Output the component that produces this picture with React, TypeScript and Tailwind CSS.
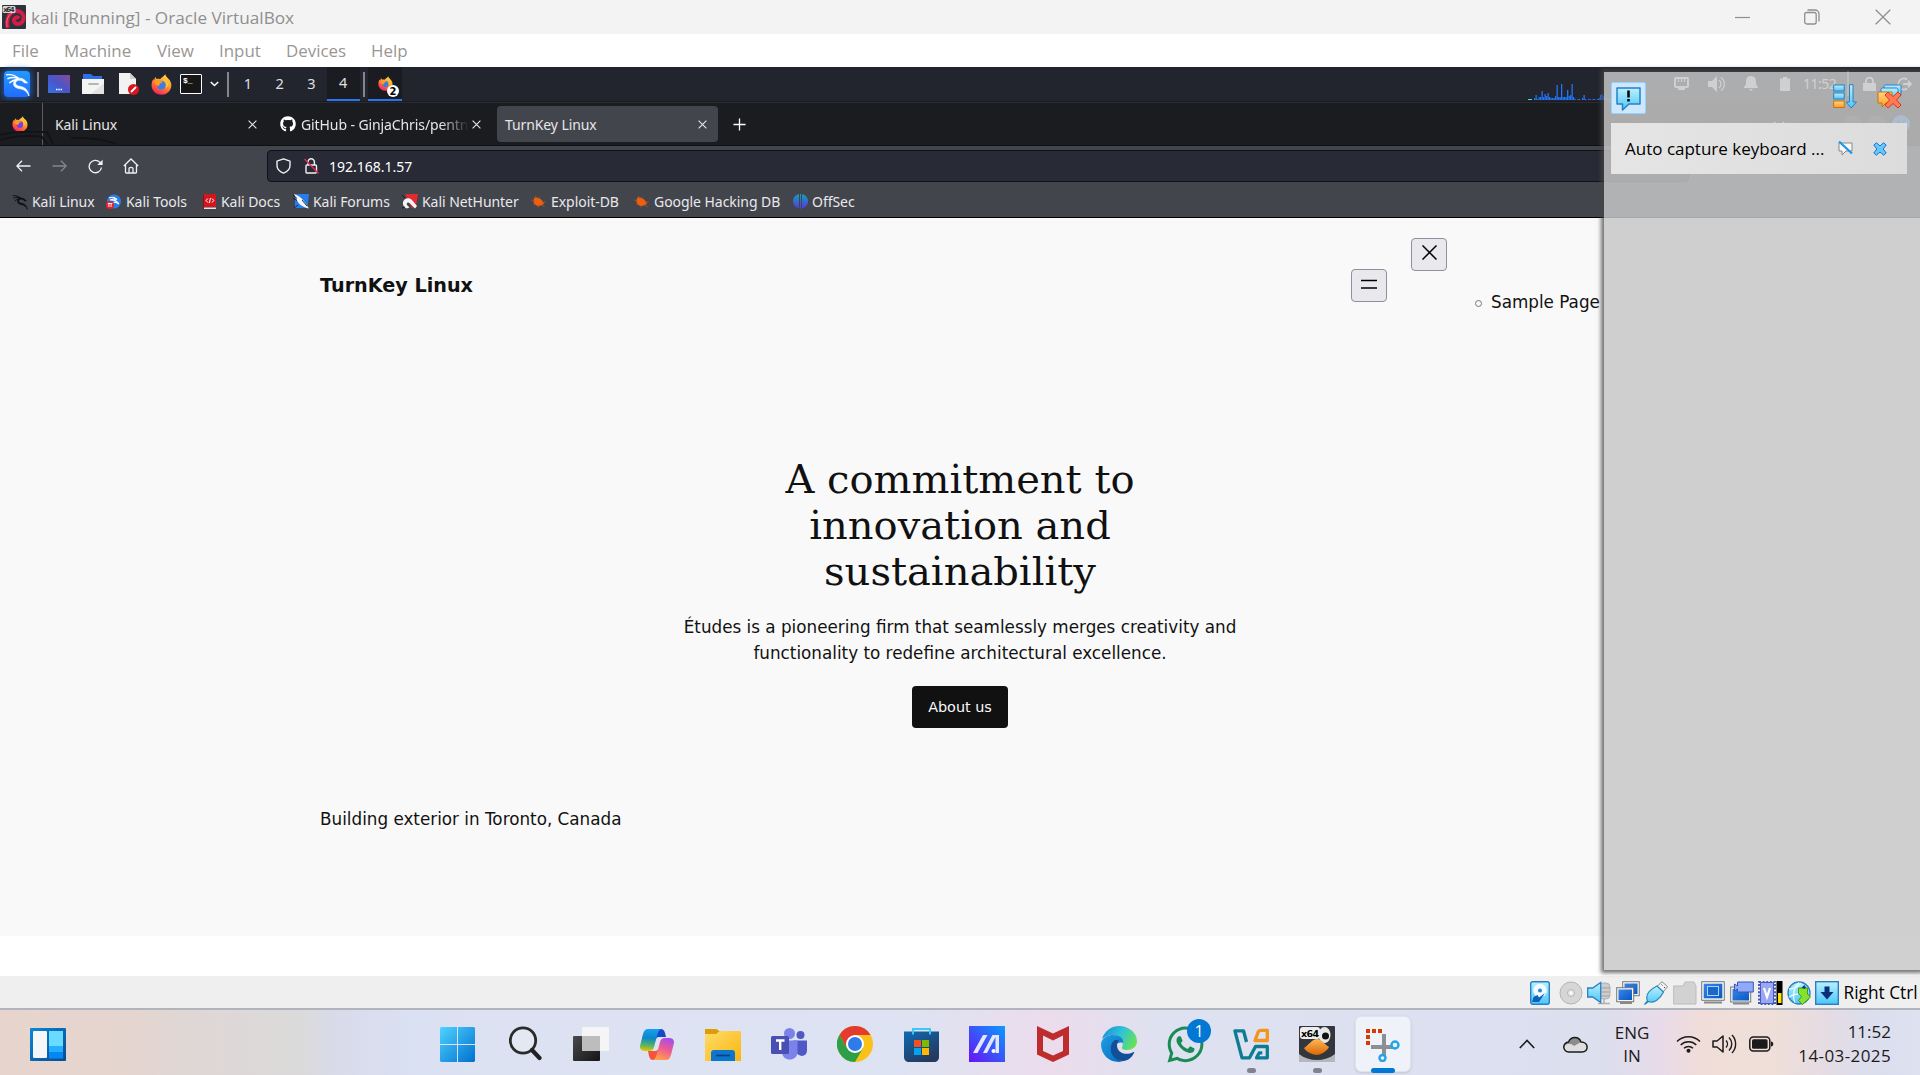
import React from "react";
import { FaGithub, FaWhatsapp } from "react-icons/fa";

type Box = { w: number; h: number; vb?: string; className?: string; children: React.ReactNode };

const Svg = ({ w, h, vb, className = "", children }: Box) => (
  <svg width={w} height={h} viewBox={vb ?? `0 0 ${w} ${h}`} fill="none" className={`block shrink-0 ${className}`}>
    {children}
  </svg>
);

const Gradients = () => (
  <svg width="0" height="0" className="absolute">
    <defs>
      <linearGradient id="ffBody" x1="0.8" y1="0" x2="0.3" y2="1">
        <stop offset="0" stopColor="#ffe14a" />
        <stop offset="0.45" stopColor="#ff9a2a" />
        <stop offset="0.8" stopColor="#ff4a45" />
        <stop offset="1" stopColor="#e8206a" />
      </linearGradient>
      <linearGradient id="purple" x1="0" y1="1" x2="1" y2="0">
        <stop offset="0" stopColor="#3572e8" />
        <stop offset="0.5" stopColor="#4a55c8" />
        <stop offset="1" stopColor="#8a4a9a" />
      </linearGradient>
      <linearGradient id="win" x1="0" y1="0" x2="1" y2="1">
        <stop offset="0" stopColor="#4fd3ff" />
        <stop offset="1" stopColor="#0070cf" />
      </linearGradient>
      <linearGradient id="widget" x1="0" y1="0" x2="1" y2="1">
        <stop offset="0" stopColor="#0a86da" />
        <stop offset="1" stopColor="#0b4a8f" />
      </linearGradient>
      <linearGradient id="dark" x1="0" y1="0" x2="1" y2="1">
        <stop offset="0" stopColor="#4a4a4a" />
        <stop offset="1" stopColor="#151515" />
      </linearGradient>
      <linearGradient id="copA" x1="0.3" y1="0" x2="0.2" y2="1">
        <stop offset="0" stopColor="#12a0f0" />
        <stop offset="0.4" stopColor="#0d86c8" />
        <stop offset="0.75" stopColor="#5cb85a" />
        <stop offset="1" stopColor="#f3c400" />
      </linearGradient>
      <linearGradient id="copB" x1="0.8" y1="0" x2="0.4" y2="1">
        <stop offset="0" stopColor="#a04cf0" />
        <stop offset="0.5" stopColor="#ee5a92" />
        <stop offset="1" stopColor="#ffa04a" />
      </linearGradient>
      <linearGradient id="folder" x1="0" y1="0" x2="1" y2="1">
        <stop offset="0" stopColor="#ffdc6a" />
        <stop offset="1" stopColor="#fbb50e" />
      </linearGradient>
      <linearGradient id="store" x1="0" y1="0" x2="0.6" y2="1">
        <stop offset="0" stopColor="#0f69b5" />
        <stop offset="1" stopColor="#243a5e" />
      </linearGradient>
      <linearGradient id="asus" x1="1" y1="0" x2="0" y2="1">
        <stop offset="0" stopColor="#0a9bff" />
        <stop offset="0.5" stopColor="#3a55f8" />
        <stop offset="1" stopColor="#6a12f5" />
      </linearGradient>
      <linearGradient id="edgeTop" x1="0" y1="0.2" x2="1" y2="0.6">
        <stop offset="0" stopColor="#1c8fd6" />
        <stop offset="0.5" stopColor="#30c3d8" />
        <stop offset="1" stopColor="#66e255" />
      </linearGradient>
      <linearGradient id="edgeLow" x1="0" y1="0" x2="1" y2="1">
        <stop offset="0" stopColor="#1fa0e4" />
        <stop offset="1" stopColor="#0669c0" />
      </linearGradient>
      <linearGradient id="sky" x1="0" y1="0" x2="0" y2="1">
        <stop offset="0" stopColor="#b9f1ff" />
        <stop offset="1" stopColor="#4cc6f8" />
      </linearGradient>
      <linearGradient id="screen" x1="0" y1="0" x2="1" y2="1">
        <stop offset="0" stopColor="#3a86e8" />
        <stop offset="1" stopColor="#0558c4" />
      </linearGradient>
      <linearGradient id="orangeBtn" x1="0" y1="0" x2="0" y2="1">
        <stop offset="0" stopColor="#ffd68a" />
        <stop offset="1" stopColor="#ff9d1e" />
      </linearGradient>
      <linearGradient id="offsec" x1="0" y1="0" x2="0" y2="1">
        <stop offset="0" stopColor="#12a0b8" />
        <stop offset="1" stopColor="#5a35e0" />
      </linearGradient>
      <linearGradient id="beak" x1="0" y1="0" x2="0" y2="1">
        <stop offset="0" stopColor="#ffb75a" />
        <stop offset="1" stopColor="#d96800" />
      </linearGradient>
    </defs>
  </svg>
);

const Firefox = ({ s, core = "#3b7de8", className }: { s: number; core?: string; className?: string }) => (
  <Svg w={s} h={s} vb="0 0 22 22" className={className}>
    <path d="M15 0.3c.3 2 1.6 2.8 3 4.300 2.500 2.500 3.600 5 3.300 8C20.800 18 16.500 21.800 11 21.800 5 21.800.6 17.400.6 11.800c0-3 .9-5 1.900-6.500l.6 1.600L4.500 3l1.200 2.300c1.300-.4 2.600-.3 3.700.2C11 3.500 13.200 3 15 .3z" fill="url(#ffBody)" />
    <circle cx="10.800" cy="11.800" r="4.600" fill={core} />
    <path d="M3.500 7.500c2-1.600 4.500-1.500 6-.2l2.800.5c-.3 1.700-3 1.500-3.400 3-.3 1 .1 1.800-.8 1.700-2.200-.3-4-2-4.600-5z" fill="#ff9a20" />
    <path d="M13.500 5.500c2.500 1.500 3.800 4 2.800 7.500 1.400-.8 1.600-2.200 1.500-3.500" stroke="#ffc53a" strokeWidth="1.300" />
  </Svg>
);

const Dragon = ({ s, color }: { s: number; color: string }) => (
  <Svg w={s} h={s} vb="0 0 26 26">
    <path d="M1 3c5-.8 9.500.2 13 3.500M2.500 7c4-1.700 7.500-1.700 11-.5M4.500 11.500c2.500-2.500 5-3.300 8-3.500" stroke={color} strokeWidth="1.500" />
    <path d="M13 6.500c4.500-.5 7.500 1 10.500 5l-3.500-.3-1.500-1.700c-1.500-.8-3-1-4.500-.8-4 1-4 4.600-.5 5.800 5 1 10 1.500 11.500 10.500-2.500-5-4.500-6.500-9-7.500-5-.8-7.500-2.500-7-6 .3-2.500 2-4.300 4-5z" fill={color} stroke={color} strokeWidth="0.700" />
  </Svg>
);

const Cross = ({ s = 9, className }: { s?: number; className?: string }) => (
  <Svg w={s} h={s} vb="0 0 9 9" className={className}>
    <path d="M.6.6l7.800 7.800M8.400.6L.6 8.400" stroke="currentColor" strokeWidth="1.100" />
  </Svg>
);

const TitleBar = () => (
  <header className="flex h-[34px] items-center bg-[#f3f3f3] text-[#8f8f8f]">
    <Svg w={24} h={24} className="ml-0.5">
      <rect width="24" height="24" rx="1" fill="#2b333d" />
      <path d="M6 23c-2-7 0-16 8-17 6-.4 9 5 7 9.500s-8 4.500-9 .5c-.6-3 3-5 5-2.500" stroke="#d41c45" strokeWidth="4" />
      <path d="M5 22c-1-7 1-14 8-15" stroke="#ff6a86" strokeWidth="1" />
      <rect x="0.500" y="1" width="13" height="7" rx="1.500" fill="#d7d7d7" />
      <text x="1.200" y="7.400" fontSize="7" fontWeight="700" fontFamily="DejaVu Sans" fill="#333" textLength="11.500">x64</text>
    </Svg>
    <span className="mt-px ml-[5px] text-[17.2px]">kali [Running] - Oracle VirtualBox</span>
    <div className="ml-auto mr-[29px] flex items-center">
      <Svg w={15} h={15}><path d="M0 7.500h15" stroke="currentColor" strokeWidth="1.200" /></Svg>
      <Svg w={16} h={16} className="ml-[54px]">
        <rect x="0.700" y="3.500" width="11.500" height="11.500" rx="2" stroke="currentColor" strokeWidth="1.300" />
        <path d="M3.500 1h7.500a4 4 0 0 1 4 4v7.500" stroke="currentColor" strokeWidth="1.300" />
      </Svg>
      <Svg w={16} h={16} className="ml-[55px]"><path d="M.7.7l14.600 14.600M15.300.7L.7 15.300" stroke="currentColor" strokeWidth="1.300" /></Svg>
    </div>
  </header>
);

const MenuBar = () => (
  <nav className="flex h-[33px] items-center bg-white pl-3 text-[16.900px] text-[#999693]">
    <span className="w-[52px]">File</span>
    <span className="w-[93px]">Machine</span>
    <span className="w-[62px]">View</span>
    <span className="w-[67px]">Input</span>
    <span className="w-[85px]">Devices</span>
    <span>Help</span>
  </nav>
);

const cpuBars = [2, 5, 1, 3, 3, 9, 3, 6, 4, 7, 3, 2, 2, 2, 4, 15, 3, 3, 16, 3, 3, 3, 10, 4, 5, 16, 3, 1, 0, 1, 1, 0, 2, 5, 1, 0, 1, 1, 0, 1, 1, 0, 1, 2, 5, 6, 4, 2, 1, 1, 1, 1, 1, 1, 0, 1, 1, 0, 1];

const Divider = ({ className = "" }: { className?: string }) => <div className={`h-[25px] w-0.5 shrink-0 bg-[#85868b] ${className}`} />;

const KaliPanel = () => (
  <div className="flex h-[34px] items-center bg-[#23252e] text-[#dfe0e2]">
    <div className="ml-1 flex size-[26px] shrink-0 items-center justify-center rounded-sm bg-[linear-gradient(180deg,#2299ff,#226cff)] shadow-[0_0_5px_2px_#1c4f9c]">
      <Dragon s={25} color="#fff" />
    </div>
    <Divider className="ml-[7px]" />
    <Svg w={22} h={18} className="ml-[9px]">
      <rect width="22" height="18" rx="0.500" fill="url(#purple)" />
      <path d="M8 14.500h1.500M10.300 14.500h1.500M12.600 14.500h1.500" stroke="#fff" strokeWidth="1.600" />
    </Svg>
    <Svg w={22} h={20} className="ml-3">
      <path d="M1 0h8l2 2h9v6H1z" fill="#2c6fe8" />
      <path d="M0 5h22v15H0z" fill="#f4f4f4" />
      <path d="M22 9v11H9z" fill="#e2e2e2" />
      <path d="M7 10h9" stroke="#b5b5b5" strokeWidth="1.800" strokeLinecap="round" />
    </Svg>
    <Svg w={21} h={22} className="ml-3.5">
      <path d="M1 0h11l6 6v15H1z" fill="#f2f2f2" />
      <path d="M12 0v6h6z" fill="#cfcfcf" />
      <circle cx="15.500" cy="16.500" r="5.500" fill="#d8161d" />
      <path d="M13 19l5-5" stroke="#fff" strokeWidth="1.800" />
    </Svg>
    <Firefox s={21} className="ml-3" />
    <div className="ml-2 h-5 w-[22px] shrink-0 rounded-[1px] border border-white bg-[#171717] pl-0.5 font-['Liberation_Mono'] text-[8px] leading-[11px] font-bold text-white">$_</div>
    <Svg w={9} h={6} className="ml-2"><path d="M.8 1l3.700 3.500L8.200 1" stroke="#fff" strokeWidth="1.600" /></Svg>
    <Divider className="ml-2" />
    <div className="ml-[3px] flex h-full w-[128px] font-['Noto_Sans'] text-[14.5px]">
      <span className="flex flex-1 items-center justify-center">1</span>
      <span className="flex flex-1 items-center justify-center">2</span>
      <span className="flex flex-1 items-center justify-center">3</span>
      <span className="flex flex-1 items-center justify-center border-b-2 border-[#2a76ee] bg-[#1b1c22] pr-px">4</span>
    </div>
    <Divider className="ml-[3px]" />
    <div className="relative ml-[3px] flex h-full w-[34px] items-center justify-center border-b-2 border-[#2a76ee] bg-[#1b1c22]">
      <Firefox s={15} />
      <span className="absolute top-[18px] left-[19px] flex size-3 items-center justify-center rounded-full bg-white font-['DejaVu_Sans'] text-[10px] font-bold text-black">2</span>
    </div>
    <svg width="134" height="20" className="ml-auto mr-[12px] self-end">
      <rect x="0" y="18" width="4" height="1" fill="#28e6d0" />
      {cpuBars.map((v, i) => (
        <rect key={i} x={6 + i * 1.5} y={19 - v} width="1.300" height={v} fill="#2273f5" />
      ))}
    </svg>
    <div className="flex w-[246px] items-center pb-px text-white">
      <Svg w={15} h={13}>
        <rect x="1" y="1" width="13" height="9" rx="1" stroke="#fff" strokeWidth="2" />
        <path d="M4.500 2v3M7.500 2v3M10.500 2v3" stroke="#fff" strokeWidth="1.200" />
        <path d="M4 10h7v3H4z" fill="#fff" />
      </Svg>
      <Svg w={17} h={16} className="ml-[19px]">
        <path d="M0 5h4l5-5v16l-5-5H0z" fill="#fff" />
        <path d="M11 4a5 5 0 0 1 0 8M13 1.500a8 8 0 0 1 0 13" stroke="#fff" strokeWidth="1.300" />
      </Svg>
      <Svg w={14} h={15} className="ml-[19px]"><path d="M7 0c4 0 5 3 5 6 0 4 2 4 2 6H0c0-2 2-2 2-6 0-3 1-6 5-6zM5 13h4l-2 2z" fill="#fff" /></Svg>
      <Svg w={10} h={14} className="ml-[22px]"><path d="M3 0h4v1.500h3V14H0V1.500h3z" fill="#fff" /></Svg>
      <span className="ml-[13px] w-[33px] font-['Noto_Sans'] text-[14px] tracking-[-0.5px]">11:52</span>
      <Divider className="ml-[11px]" />
      <Svg w={13} h={14} className="ml-[14px]"><path d="M0 6h13v8H0z" fill="#fff" /><path d="M3 6.500V4a3.500 3.500 0 0 1 7 0v2.500" stroke="#fff" strokeWidth="1.800" /></Svg>
      <Svg w={15} h={14} className="ml-[21px]"><path d="M10 2.500A5.500 5.500 0 1 0 10 11.500M6 7h7M11 4l3 3-3 3" stroke="#fff" strokeWidth="1.800" /></Svg>
    </div>
  </div>
);

const TabStrip = () => (
  <div className="flex h-11 items-center border-y border-t-[#2b2c31] border-b-[#0f1014] bg-[#1b1c20] font-['Noto_Sans'] text-[14px] text-[#e6e6e8]">
    <div className="relative flex h-full w-[43px] shrink-0 items-center border-r border-[#5b5c60] pl-3">
      <Firefox s={16} core="#7a3fe0" />
      <svg width="125" height="14" className="absolute bottom-0 left-0" fill="none">
        <path d="M0 4C16 0 32 0 47 1l6 12M0 9c14-4 28-5 42-3l5 7M71 7c18-1 34 2 46 6" stroke="#121317" strokeWidth="1.800" />
      </svg>
    </div>
    <div className="flex w-[226px] items-center pl-3 pr-[12px]">
      <span className="flex-1 tracking-[-0.1px]">Kali Linux</span>
      <Cross />
    </div>
    <div className="flex w-[228px] items-center pl-[11px] pr-[15px]">
      <FaGithub size={16} color="#fff" className="shrink-0" />
      <span className="ml-[5px] w-[168px] shrink-0 overflow-hidden whitespace-nowrap [mask-image:linear-gradient(to_right,#000_140px,transparent_168px)] tracking-[-0.1px]">GitHub - GinjaChris/pentn</span>
      <Cross className="ml-[3px]" />
    </div>
    <div className="flex h-9 w-[221px] items-center rounded bg-[#43454d] pl-2 pr-[11px]">
      <span className="flex-1 tracking-[-0.1px]">TurnKey Linux</span>
      <Cross />
    </div>
    <Svg w={13} h={13} className="ml-[15px]"><path d="M6.500.5v12M.5 6.500h12" stroke="#fff" strokeWidth="1.300" /></Svg>
    <div className="ml-auto mr-[10px] flex items-center text-white">
      <Svg w={12} h={7} className="mr-[59px]"><path d="M1 1l5 5 5-5" stroke="#fff" strokeWidth="1.500" /></Svg>
      <div className="flex gap-[6px]">
        <span className="size-[18px] rounded-full bg-[#34363d]" />
        <span className="size-[18px] rounded-full bg-[#34363d]" />
        <span className="flex size-[18px] items-center justify-center rounded-full bg-[#2b76f0] text-[#1b1c20]"><Cross s={8} /></span>
      </div>
    </div>
  </div>
);

const Toolbar = () => (
  <div className="flex h-10 items-center bg-[#43454d] text-[#f0f0f2]">
    <Svg w={15} h={12} className="ml-[16px]"><path d="M14.500 6H1M6 .8L.9 6 6 11.200" stroke="currentColor" strokeWidth="1.300" /></Svg>
    <Svg w={15} h={12} className="ml-[21px]"><path d="M.5 6H14M9 .8L14.100 6 9 11.200" stroke="#84868c" strokeWidth="1.300" /></Svg>
    <Svg w={15} h={15} className="ml-[21px]">
      <path d="M13.500 8.500A6.200 6.200 0 1 1 11.800 3.200l2 2" stroke="currentColor" strokeWidth="1.300" />
      <path d="M14.600.8v5.200H9.200z" fill="currentColor" />
    </Svg>
    <Svg w={16} h={16} className="ml-[20px]">
      <path d="M.8 8L8 1l7.200 7M2.500 7v7.200c0 .5.300.8.8.8h9.400c.5 0 .8-.3.8-.8V7M6 15v-4.500C6 9 10 9 10 10.500V15" stroke="currentColor" strokeWidth="1.300" />
    </Svg>
    <div className="ml-[128px] flex h-8 w-[1422px] items-center rounded border border-[#101116] bg-[#282a36] pl-[8px]">
      <Svg w={15} h={16}><path d="M7.500.8l6.500 2.400v4.300c0 4-3 6.300-6.500 7.700C4 13.800 1 11.500 1 7.500V3.200z" stroke="currentColor" strokeWidth="1.400" strokeLinejoin="round" /></Svg>
      <Svg w={15} h={16} className="ml-[13px]">
        <rect x="2" y="7" width="10.500" height="8" rx="1" stroke="currentColor" strokeWidth="1.400" />
        <path d="M4 7V4a3.200 3.200 0 0 1 6.400 0v3" stroke="currentColor" strokeWidth="1.400" />
        <path d="M.5 1l14 14.500" stroke="#e22850" strokeWidth="1.400" />
      </Svg>
      <span className="ml-[10px] font-['Noto_Sans'] text-[14px] text-white">192.168.1.57</span>
    </div>
  </div>
);

const Beetle = () => (
  <Svg w={15} h={12}>
    <path d="M3 2c3-1.500 8 1 10 5.500C9 11.500 4 10 2.500 6.500z" fill="#ee5f12" />
    <path d="M.3 4l3 .8M4.500 0l.7 2.500M8 .8l.3 2M2.500 9l1.800-1.500M7 11.500l.5-2M11 6.500l3.500-.8M11 9l2.500 1.800" stroke="#b8500f" strokeWidth="0.900" />
  </Svg>
);

const Bookmark = ({ icon, label, className }: { icon: React.ReactNode; label: string; className: string }) => (
  <div className={`flex shrink-0 items-center ${className}`}>
    {icon}
    <span className="whitespace-nowrap">{label}</span>
  </div>
);

const Bookmarks = () => (
  <div className="flex h-[32px] items-center border-b-[1px] border-black bg-[#43454d] pl-3 font-['Noto_Sans'] text-[14px] tracking-[-0.05px] text-[#e9e9eb]">
    <Bookmark className="w-[94px] gap-1" label="Kali Linux" icon={<Dragon s={16} color="#0c0c0e" />} />
    <Bookmark
      className="w-[97px] gap-[5px]"
      label="Kali Tools"
      icon={
        <Svg w={15} h={15}>
          <circle cx="8" cy="7.500" r="7" fill="#287dec" />
          <path d="M3 4c3-1.500 6-.5 8 1.500-3-1-5-.5-7 .5 3-.5 6 0 9 4-2-1.500-4-2-5.500-1.500" stroke="#fff" strokeWidth="1.100" />
          <circle cx="4" cy="11" r="4" fill="#dd2430" />
          <path d="M2.900 9.500v3.500M5.100 9.500v3.500M1.800 9.500h4.500" stroke="#fff" strokeWidth="0.900" />
        </Svg>
      }
    />
    <Bookmark
      className="w-[90px] gap-[5px]"
      label="Kali Docs"
      icon={
        <Svg w={13} h={16}>
          <path d="M1 0h12v13H1z" fill="#d3151d" />
          <path d="M0 1h1v14H0z" fill="#920d12" />
          <path d="M1 13.500h12V15H1z" fill="#e9e0e0" />
          <path d="M4.800 4.500L3 6.500l1.800 2M9 4.500l1.800 2L9 8.500M7.500 4L6.300 9" stroke="#fff" strokeWidth="1" />
        </Svg>
      }
    />
    <Bookmark
      className="w-[109px] gap-1"
      label="Kali Forums"
      icon={
        <Svg w={16} h={15}>
          <path d="M2 0h14l-1.500 14H2z" fill="#287dec" />
          <path d="M1 0c3 1 7 3 9.500 6.500L16 14.500C10 13.500 5 10 3.500 5z" fill="#f4f6fa" />
          <path d="M0 1l4 3.500M0 4l4 2.500M1 14l4-3M9 6l5 6" stroke="#1a1b1f" strokeWidth="0.900" />
        </Svg>
      }
    />
    <Bookmark
      className="w-[129px] gap-1"
      label="Kali NetHunter"
      icon={
        <Svg w={16} h={15}>
          <path d="M3 0h13l-2 12-4 2z" fill="#e22a32" />
          <path d="M1 8c1-4 6-5 9-2l5 6-2 2.500-5.500-5.500c-1.500-1.500-4 .5-2 2.500l2 2-3 1c-3-1.500-4-4-3.500-6.500z" fill="#f5f5f7" />
          <path d="M0 1l3 3M0 14l3-1" stroke="#1a1b1f" />
        </Svg>
      }
    />
    <Bookmark className="w-[103px] gap-[5px]" label="Exploit-DB" icon={<Beetle />} />
    <Bookmark className="w-[159px] gap-[5px]" label="Google Hacking DB" icon={<Beetle />} />
    <Bookmark
      className="gap-1"
      label="OffSec"
      icon={
        <Svg w={15} h={15}>
          <path d="M6 .3v14C2 13.500 0 10.500 0 7.300S2 1 6 .3zM9 .3v14c4-.8 6-3.800 6-7S13 1 9 .3zM7 0h1v15H7z" fill="url(#offsec)" />
        </Svg>
      }
    />
  </div>
);

const SitePage = () => (
  <main className="flex h-[718px] flex-col bg-[#f9f9f9] font-['DejaVu_Sans'] text-[#111]">
    <div className="flex h-[238px] items-start pl-[320px]">
      <h2 className="mt-[54px] w-[1031px] text-[19.2px] leading-[27px] font-bold">TurnKey Linux</h2>
      <button className="mt-[51px] flex h-[33px] w-9 items-center justify-center rounded border border-[#8f8f9d] bg-[#e9e9ed]">
        <Svg w={16} h={10} className="mt-[-3px]"><path d="M0 1.500h16M0 9h16" stroke="#000" strokeWidth="1.500" /></Svg>
      </button>
      <button className="mt-5 ml-6 flex h-[33px] w-9 items-center justify-center rounded border border-[#8f8f9d] bg-[#e9e9ed]">
        <Svg w={15} h={15} className="mt-[-5px]"><path d="M.5.5l14 14M14.500.5l-14 14" stroke="#000" strokeWidth="1.500" /></Svg>
      </button>
      <div className="mt-[71px] ml-[28px] flex items-center">
        <span className="mt-0.5 size-[7px] rounded-full border border-[#777]" />
        <span className="ml-[9px] text-[16.8px] leading-[27px] whitespace-nowrap">Sample Page</span>
      </div>
    </div>
    <section className="flex flex-col items-center text-center">
      <h1 className="font-['DejaVu_Serif'] text-[40px] leading-[46px]">
        A commitment to<br />innovation and<br />sustainability
      </h1>
      <p className="mt-5 text-[16.8px] leading-[26px]">
        Études is a pioneering firm that seamlessly merges creativity and<br />functionality to redefine architectural excellence.
      </p>
      <button className="mt-5 h-[42px] w-24 rounded bg-[#111] pt-px text-[14.4px] text-[#f9f9f9]">About us</button>
    </section>
    <p className="mt-[78px] ml-[320px] text-[16.8px] leading-[27px]">Building exterior in Toronto, Canada</p>
  </main>
);

const Slot = ({ children }: { children: React.ReactNode }) => <span className="flex w-[28.500px] shrink-0 items-center justify-center">{children}</span>;

const StatusBar = () => (
  <div className="flex h-8 items-center bg-[#efefef] pt-[2px] pl-[1526px]">
    <Slot>
      <Svg w={20} h={24} className="ml-[-1px]">
        <rect x="0.700" y="0.700" width="18.600" height="22.600" rx="2" fill="url(#sky)" stroke="#2a7fc4" strokeWidth="1.400" />
        <circle cx="10" cy="9.500" r="6.800" fill="#f3fbff" />
        <circle cx="10" cy="9.500" r="2" fill="#2a86d8" />
        <path d="M15 12l-6 9H2l1.500-5 4-2 1.500 2.500z" fill="#0b62bd" />
      </Svg>
    </Slot>
    <div className="flex pl-[2px]">
      <Slot>
        <Svg w={24} h={24}>
          <circle cx="12" cy="12" r="11" fill="#d6d6d6" stroke="#b5b5b5" />
          <circle cx="12" cy="12" r="3.500" fill="#e8e8e8" stroke="#b5b5b5" />
          <circle cx="12" cy="12" r="1.200" fill="#fff" />
        </Svg>
      </Slot>
      <Slot>
        <Svg w={24} h={24}>
          <rect x="12" y="2" width="11" height="16" rx="4" fill="#cdcdcd" stroke="#b0b0b0" />
          <path d="M13 7h10M13 11h10M13 15h10M17 18v4M11 22.500h12" stroke="#b0b0b0" strokeWidth="1.500" />
          <path d="M.7 7h5l8-5.500v20L5.700 16h-5z" fill="url(#sky)" stroke="#2a7fc4" strokeWidth="1.300" />
        </Svg>
      </Slot>
      <Slot>
        <Svg w={24} h={24}>
          <rect x="6.700" y="0.700" width="16.600" height="14" fill="#f5f5f5" stroke="#777" />
          <rect x="8.500" y="2.500" width="13" height="10.500" fill="url(#screen)" />
          <rect x="0.700" y="6.700" width="17" height="14" fill="#f5f5f5" stroke="#777" />
          <rect x="2.500" y="8.500" width="13.500" height="10.500" fill="url(#screen)" />
          <path d="M4 22h12" stroke="#888" strokeWidth="2" />
        </Svg>
      </Slot>
      <Slot>
        <Svg w={24} h={24}>
          <path d="M13 5.500L18 .7l5.500 5L19 11z" fill="#f3f3f3" stroke="#888" />
          <path d="M17.500 3.500l1 1M20 6l1 1" stroke="#444" />
          <path d="M.5 23.500L3.500 20C1 14 5 9 13 5l6.500 6C16 18 10 23 4.500 20.500z" fill="url(#sky)" stroke="#2d86b8" strokeWidth="1.200" />
        </Svg>
      </Slot>
      <Slot>
        <Svg w={24} h={24}><path d="M.7 5H10l2-4h9l2 4v18H.7z" fill="#d2d2d2" stroke="#bcbcbc" /></Svg>
      </Slot>
      <Slot>
        <Svg w={24} h={24}>
          <path d="M.7.7h22.600v18.600H.7z" fill="#f5f5f5" stroke="#777" />
          <rect x="2.700" y="2.700" width="18.600" height="14.600" fill="url(#screen)" />
          <rect x="6.500" y="5.500" width="11" height="9" fill="#1a66cc" stroke="#a8d4ff" />
          <path d="M3 21.500h18" stroke="#888" strokeWidth="2" />
        </Svg>
      </Slot>
      <Slot>
        <Svg w={24} h={24}>
          <rect x="0.700" y="6" width="20" height="15" fill="#f5f5f5" stroke="#777" />
          <rect x="2.500" y="8" width="16.500" height="11.500" fill="url(#screen)" />
          <path d="M3 22.500h16" stroke="#888" strokeWidth="2" />
          <path d="M4.500 3l3 2V1h15.800v10H7.500V8l-3 2z" fill="#8faaf8" stroke="#3c56b8" />
        </Svg>
      </Slot>
      <Slot>
        <Svg w={25} h={24}>
          <rect x="1" y="1" width="16" height="22" stroke="#4a5ab8" strokeWidth="2" strokeDasharray="2 1.600" />
          <rect x="2.500" y="1.500" width="13" height="21" fill="#98a8f5" stroke="#4a5ab8" />
          <path d="M6 7l3 9 3-9" stroke="#fff" strokeWidth="2.200" />
          <rect x="18.500" width="6" height="24" fill="#000" />
          <rect x="20" y="12" width="3.500" height="10" fill="#fce400" />
        </Svg>
      </Slot>
      <Slot>
        <Svg w={24} h={24}>
          <circle cx="12" cy="12" r="11" fill="url(#sky)" stroke="#2a7fc4" strokeWidth="1.300" />
          <path d="M12 1.500c-5 4-7 14-4 20M2 8c4 0 8-1 12-6M2 16c3-2 5-3 9-3" stroke="#eafaff" strokeWidth="1.300" />
          <path d="M11.500 7h9v6l3 3-8 7.500-4-4 3-4-3-3z" fill="#86e02e" stroke="#3f9c16" />
          <path d="M14.500 6.500l3-2.500 1.500 2.500-1.500 1.500z" fill="#0b3f80" />
        </Svg>
      </Slot>
      <Slot>
        <Svg w={24} h={24}>
          <rect x="0.700" y="0.700" width="22.600" height="22.600" fill="url(#sky)" stroke="#2a7fc4" strokeWidth="1.400" />
          <path d="M9.500 5.500h5V11h4L12 18.500 5.500 11h4z" fill="#0c2f7a" />
        </Svg>
      </Slot>
    </div>
    <span className="ml-[2px] text-[17.3px] whitespace-nowrap text-black">Right Ctrl</span>
  </div>
);

const DockItem = ({ children }: { children: React.ReactNode }) => (
  <span className="relative flex h-full w-[66px] shrink-0 items-center justify-center pt-[3px]">{children}</span>
);

const Taskbar = () => (
  <footer className="relative flex h-[67px] items-center border-t-2 border-[#b1b3bd] bg-[linear-gradient(90deg,#e7d5cd_0px,#e5d5cf_130px,#dfd7d6_190px,#dbdada_300px,#d9daea_335px,#dae1f2_410px,#dde2f2_500px,#dde3f2_900px,#ecdcec_1055px,#dee1f0_1160px,#dce0f0_1500px,#dbdfee_1600px,#e8dbea_1660px,#f0ddd9_1700px,#f0dfd8_1770px,#e5dce3_1825px,#dcdeee_1870px,#dde1f0_1920px)]">
    <Svg w={36} h={33} className="ml-[30px] mt-[3px]">
      <rect width="36" height="33" rx="1" fill="url(#widget)" />
      <rect x="3" y="3" width="14" height="27" rx="1" fill="#f5f6f8" />
      <rect x="19" y="3" width="14" height="15" fill="#68dbff" />
      <rect x="19" y="18" width="14" height="6" fill="#27adff" />
      <rect x="19" y="24" width="14" height="6.500" fill="#0487f0" />
    </Svg>
    <div className="ml-[360px] flex h-full">
      <DockItem>
        <Svg w={35} h={35} className="ml-[-3px]"><path d="M1 0h16v17H0V1zM18 0h16l1 1v16H18zM0 18h17v17H1l-1-1zM18 18h17v16l-1 1H18z" fill="url(#win)" /></Svg>
      </DockItem>
      <DockItem>
        <Svg w={33} h={35} className="mt-[-1px]">
          <circle cx="14" cy="14.500" r="12.700" fill="#e3e8f3" stroke="#2a2a2a" strokeWidth="2.800" />
          <path d="M23 24l7.500 8" stroke="#222" strokeWidth="4.200" strokeLinecap="round" />
        </Svg>
      </DockItem>
      <DockItem>
        <Svg w={36} h={34}>
          <rect y="9" width="27" height="25" rx="1" fill="url(#dark)" />
          <rect x="9" width="27" height="24" rx="1" fill="#f5f5f5" />
          <rect x="9" y="9" width="18" height="15" fill="#bdbdbd" />
        </Svg>
      </DockItem>
      <DockItem>
        <Svg w={34} h={31}>
          <path d="M17 0h4c2 0 3 1 4 4l1 4h-8l-4 3z" fill="#1548c8" />
          <path d="M17 31h-4c-2 0-3-1-4-4l-1-5h8l4-3z" fill="#f4543a" />
          <path d="M8 0h14c-3 0-4 3-5 7l-3 11c-1 3-2 4-5 4H5c-4 0-6-2-4.500-7L3 5c1-3 2-5 5-5z" fill="url(#copA)" />
          <path d="M26 31H12c3 0 4-3 5-7l3-11c1-3 2-4 5-4h4c4 0 6 2 4.500 7L31 26c-1 3-2 5-5 5z" fill="url(#copB)" />
        </Svg>
      </DockItem>
      <DockItem>
        <Svg w={36} h={33}>
          <path d="M0 1h11c2 0 3 3 5 3h-3v3H0z" fill="#dc9d06" />
          <path d="M0 6h11l4-3h20l1 1v29H0z" fill="url(#folder)" />
          <path d="M6 33v-8c0-2 1-3 3-3h18c2 0 3 1 3 3v8z" fill="#0b76cc" />
          <path d="M11 27.500h14" stroke="#073f86" strokeWidth="1.600" />
        </Svg>
      </DockItem>
      <DockItem>
        <Svg w={36} h={33}>
          <circle cx="18.500" cy="5.500" r="5.500" fill="#7a82ea" />
          <circle cx="29.500" cy="7" r="4" fill="#4f58c5" />
          <path d="M22 12.500h14V22c0 8-9 7-11 2z" fill="#4f58c5" />
          <path d="M11 12.500h15.500V24c0 10-15.500 10-15.500 0z" fill="#7b83eb" />
          <rect y="8" width="18" height="18" rx="1.500" fill="#4950b4" />
          <path d="M5 12.500h8.500M9.200 12.500V22" stroke="#fff" strokeWidth="2.400" />
        </Svg>
      </DockItem>
      <DockItem>
        <Svg w={36} h={36}>
          <circle cx="18" cy="18" r="18" fill="#fbc116" />
          <path d="M2.400 9A18 18 0 0 1 33.600 9H18l-7.800 13.500z" fill="#e33b2e" />
          <path d="M2.400 9A18 18 0 0 0 18 36l7.800-13.500H10.200z" fill="#2c9f48" />
          <circle cx="18" cy="18" r="9" fill="#fff" />
          <circle cx="18" cy="18" r="7" fill="#2f7bea" />
        </Svg>
      </DockItem>
      <DockItem>
        <Svg w={35} h={35}>
          <path d="M0 4.500h35V30c0 3-2 5-5 5H5c-3 0-5-2-5-5z" fill="url(#store)" />
          <path d="M9 7.500V2h17v5.500" stroke="#3bc8f5" strokeWidth="2" />
          <path d="M10 13h7v7h-7z" fill="#f25022" /><path d="M18 13h7v7h-7z" fill="#7fba00" />
          <path d="M10 21h7v7h-7z" fill="#00a4ef" /><path d="M18 21h7v7h-7z" fill="#ffb900" />
        </Svg>
      </DockItem>
      <DockItem>
        <Svg w={36} h={36}>
          <rect width="36" height="36" fill="url(#asus)" />
          <path d="M4 27l10-18h4.500L8.500 27zM14 27L23.500 9H30v13h-3.500V11L18 27zM26.500 22H30v5h-3.500z" fill="#e4e6ff" />
          <circle cx="24.500" cy="25" r="2" fill="#fff" />
        </Svg>
      </DockItem>
      <DockItem>
        <Svg w={32} h={36}><path d="M0 0l16 7.500L32 0v28.500L16 36 0 28.500zM6 9.500v15.500l10 4.500 10-4.500V9.500l-10 5z" fill="#be2c2e" fillRule="evenodd" /></Svg>
      </DockItem>
      <DockItem>
        <Svg w={36} h={36}>
          <path d="M1 13C4 4 11 0 18 0c10 0 18 7 18 15 0 6-5 9-10 9-4 0-6-1-4.500-4C23 15 19 9 12 9c-5 0-8 2-11 4z" fill="url(#edgeTop)" />
          <path d="M0 18C1 11 7 9 12 9c7 0 11 4 10 8-6-2-10 4-9 9 .8 5 5 9 9 9.500C10 38 0 30 0 18z" fill="url(#edgeLow)" />
          <path d="M14 14c-5 3-6 12-1 17 5 6 15 6 20-4 .5-1-.3-1.200-1-.8-8 4-16 0-16-7 0-2 1-4 2-5z" fill="#124f98" />
        </Svg>
      </DockItem>
      <DockItem>
        <FaWhatsapp size={41} color="#1c8a55" />
        <span className="absolute top-[9px] left-[35px] flex size-6 items-center justify-center rounded-full bg-[#0078d4] text-[16px] text-white">1</span>
      </DockItem>
      <DockItem>
        <Svg w={36} h={32}>
          <path d="M13.500 14L10.500 2.800H1.900L9 29.800h7.500L22.500 18.500H34.300V29.800H23.500l2.800-5h3" stroke="#0c7c90" strokeWidth="3.300" strokeLinejoin="round" />
          <path d="M22 12.500l3.200-8.500c.5-1.200 1-1.700 2.300-1.700h6.800v10.200z" stroke="#f2951a" strokeWidth="3.300" strokeLinejoin="round" />
        </Svg>
        <span className="absolute bottom-0.5 h-[5px] w-[9px] rounded-full bg-[#80828d]" />
      </DockItem>
      <DockItem>
        <Svg w={36} h={36}>
          <rect width="36" height="36" rx="1" fill="#33363c" />
          <path d="M0 28c10 8 26 8 36 0v8H0z" fill="#b5b7bb" />
          <ellipse cx="25.500" cy="9" rx="6" ry="8" fill="#e8e8e8" />
          <circle cx="26.500" cy="10" r="3.500" fill="#111" />
          <path d="M5 22c5-3 8-9 13-9s7 5 12 8c-2 4-8 8-12 8S7 26 5 22z" fill="url(#beak)" />
          <rect x="1" y="1" width="20" height="12" rx="3" fill="#ededed" />
          <text x="2" y="11" fontSize="9.500" fontWeight="700" fontFamily="DejaVu Sans" fill="#000" textLength="18">x64</text>
        </Svg>
        <span className="absolute bottom-0.5 h-[5px] w-[9px] rounded-full bg-[#80828d]" />
      </DockItem>
      <DockItem>
        <div className="flex size-14 items-center justify-center rounded-md border border-[#dfe3ee] bg-[#f0f2fa] shadow-sm">
          <Svg w={34} h={35}>
            <path d="M2 18V4h16" stroke="#d83b01" strokeWidth="4" strokeDasharray="4 2" />
            <path d="M18 7v22M5 20h22" stroke="#8b9097" strokeWidth="4" />
            <circle cx="29" cy="18" r="3.500" fill="#f0f2fa" stroke="#23a3ea" strokeWidth="2.400" />
            <circle cx="16.500" cy="31" r="3" fill="#f0f2fa" stroke="#23a3ea" strokeWidth="2.400" />
          </Svg>
        </div>
        <span className="absolute bottom-0.5 h-[5px] w-6 rounded-full bg-[#0078d4]" />
      </DockItem>
    </div>
    <div className="mt-[3px] ml-[103px] flex items-center text-[17px] text-[#1b1b1b]">
      <Svg w={16} h={10}><path d="M.8 9L8 1.500 15.200 9" stroke="currentColor" strokeWidth="1.600" /></Svg>
      <Svg w={25} h={17} className="ml-[28px]">
        <path d="M6 16a5 5 0 0 1-.5-10C8 0 16 0 18 6c8 0 8 10 1 10z" fill="#dedede" />
        <path d="M6 6C8 0 16 0 18 6l-7 4C8 7 3 7 1 11c0-3 2-5 5-5z" fill="#8c8c8c" />
        <path d="M6 16a5 5 0 0 1-.5-10C8 0 16 0 18 6c8 0 8 10 1 10z" stroke="#1b1b1b" strokeWidth="1.500" />
      </Svg>
      <span className="ml-[24px] w-[40px] text-center leading-[23px]">ENG<br />IN</span>
      <Svg w={25} h={18} className="ml-[24px]">
        <path d="M1 6.500a16.300 16.300 0 0 1 23 0M4.700 10a11 11 0 0 1 15.600 0M8 13.300a6.300 6.300 0 0 1 9 0" stroke="currentColor" strokeWidth="1.500" />
        <circle cx="12.500" cy="15.800" r="2" fill="currentColor" />
      </Svg>
      <Svg w={25} h={20} className="ml-[11px]">
        <path d="M1 7h4l6-5v16l-6-5H1z" stroke="currentColor" strokeWidth="1.500" strokeLinejoin="round" />
        <path d="M14 6.500a5 5 0 0 1 0 7M17 3.500a9 9 0 0 1 0 13M20 1a13 13 0 0 1 0 18" stroke="currentColor" strokeWidth="1.400" />
      </Svg>
      <Svg w={25} h={16} className="ml-[12px]">
        <rect x="0.800" y="1" width="20" height="14" rx="3.500" stroke="currentColor" strokeWidth="1.500" />
        <rect x="3" y="3.200" width="15.600" height="9.600" rx="1.500" fill="currentColor" />
        <path d="M22 5.500c3 0 3 5 0 5z" fill="currentColor" />
      </Svg>
      <span className="ml-[20px] w-[97px] text-right leading-[24px]">11:52<br /><span className="tracking-[0.4px]">14-03-2025</span></span>
    </div>
  </footer>
);

const NotificationCenter = () => (
  <aside className="absolute top-[72px] left-[1604px] h-[898px] w-[316px] bg-[rgba(199,199,199,0.84)] shadow-[0_0_4px_3px_rgba(70,70,70,0.75)]">
    <div className="flex h-[51px] items-center pl-[7px]">
      <div className="flex h-8 w-[35px] items-center justify-center rounded-[2px] border border-[#99d1ff] bg-[#cce8ff]">
        <Svg w={25} h={24} className="mt-0.5">
          <path d="M1 1h23v16H13l-6.500 6V17H1z" fill="url(#sky)" stroke="#2a7fc4" strokeWidth="1.500" strokeLinejoin="round" />
          <path d="M12.500 3.500v7M12.500 12v2.500" stroke="#000" strokeWidth="2.500" />
        </Svg>
      </div>
      <Svg w={24} h={25} className="mt-[-2px] ml-[187px]">
        <rect x="0.700" y="1" width="10.500" height="6" fill="url(#sky)" stroke="#2a7fc4" />
        <rect x="0.700" y="9" width="10.500" height="6" fill="url(#sky)" stroke="#2a7fc4" />
        <rect x="0.700" y="17" width="10.500" height="6.500" fill="url(#orangeBtn)" stroke="#c97508" />
        <path d="M16.500.7h3.500V18h3.500L18.200 24 13 18h3.500z" fill="url(#sky)" stroke="#2a7fc4" />
      </Svg>
      <Svg w={25} h={25} className="mt-[-2px] ml-5">
        <rect x="7" y="1" width="17" height="11" rx="1.500" fill="url(#sky)" stroke="#2a7fc4" />
        <rect x="4" y="4" width="17" height="11" rx="1.500" fill="url(#sky)" stroke="#2a7fc4" />
        <path d="M1 8h14v11H9l-4 4v-4H1z" fill="url(#orangeBtn)" stroke="#c97508" />
        <path d="M8 11l3-3 5 4.500L21 8l3 3-4.500 5 4.500 5-3 3-5-4.500L11 24l-3-3 4.500-5z" fill="#ff7a55" stroke="#d63a16" />
      </Svg>
    </div>
    <div className="ml-[7px] flex h-[51px] w-[296px] items-center bg-[linear-gradient(90deg,#e5e5e5,#dcdcdc)] pl-[14px]">
      <span className="w-[213px] text-[17px] whitespace-nowrap text-black">Auto capture keyboard ...</span>
      <Svg w={15} h={15}>
        <path d="M1 2h13v8H8l-4 4v-4H1z" fill="#f8f8f8" stroke="#888" />
        <path d="M1 .5l13 12" stroke="#1f97e8" strokeWidth="2.200" />
      </Svg>
      <Svg w={14} h={14} className="ml-5">
        <path d="M.8 3l2.700-2.200L7 4 10.500.8 13.200 3 10.200 7l3 4-2.700 2.200L7 10l-3.500 3.200L.8 11l3-4z" fill="#66c8ff" stroke="#1676c8" />
      </Svg>
    </div>
  </aside>
);

export default function App() {
  return (
    <div className="relative flex h-[1075px] w-[1920px] flex-col overflow-hidden bg-white font-['Open_Sans',sans-serif]">
      <Gradients />
      <TitleBar />
      <MenuBar />
      <KaliPanel />
      <div className="h-px bg-[#1a1b20]" />
      <TabStrip />
      <Toolbar />
      <Bookmarks />
      <SitePage />
      <div className="h-10 bg-white" />
      <StatusBar />
      <Taskbar />
      <NotificationCenter />
    </div>
  );
}
